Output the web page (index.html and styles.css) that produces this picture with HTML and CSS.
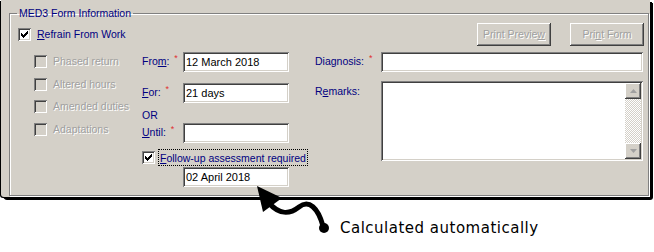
FILE: index.html
```html
<!DOCTYPE html>
<html lang="en">
<head>
    <meta charset="UTF-8">
    <title>MED3 Form Information</title>
    <link rel="stylesheet" href="styles.css">
</head>
<body>
<div class="window">
    <fieldset class="group">
        <legend>MED3 Form Information</legend>

        <div class="top-row">
            <label class="check"><span class="box checked"></span><span class="navy"><u>R</u>efrain From Work</span></label>
            <div class="buttons">
                <button class="btn" disabled>Print Previe<u>w</u></button>
                <button class="btn" disabled>Pri<u>n</u>t Form</button>
            </div>
        </div>

        <div class="columns">
            <div class="col-options">
                <label class="check off"><span class="box"></span><span>Phased return</span></label>
                <label class="check off"><span class="box"></span><span>Altered hours</span></label>
                <label class="check off"><span class="box"></span><span>Amended duties</span></label>
                <label class="check off"><span class="box"></span><span>Adaptations</span></label>
            </div>

            <div class="col-dates">
                <div class="field r-from">
                    <span class="lbl">Fro<u>m</u>: <i class="req">*</i></span>
                    <div class="input">12 March 2018</div>
                </div>
                <div class="field r-for">
                    <span class="lbl"><u>F</u>or: <i class="req">*</i></span>
                    <div class="input">21 days</div>
                </div>
                <div class="or">OR</div>
                <div class="field r-until">
                    <span class="lbl"><u>U</u>ntil: <i class="req">*</i></span>
                    <div class="input"></div>
                </div>
                <label class="check follow"><span class="box checked"></span><span class="navy focus"><u>F</u>ollow-up assessment required</span></label>
                <div class="input date">02 April 2018</div>
            </div>

            <div class="col-notes">
                <div class="field">
                    <span class="lbl wide">Diagnosis: <i class="req">*</i></span>
                    <div class="input grow"></div>
                </div>
                <div class="field remarks">
                    <span class="lbl wide">R<u>e</u>marks:</span>
                    <div class="input grow memo">
                        <div class="scroll">
                            <div class="sbtn"><svg width="7" height="4" viewBox="0 0 7 4"><path d="M3.5 0 L7 4 L0 4 Z" fill="#a0a0a0"/></svg></div>
                            <div class="track"></div>
                            <div class="sbtn"><svg width="7" height="4" viewBox="0 0 7 4"><path d="M0 0 L7 0 L3.5 4 Z" fill="#a0a0a0"/></svg></div>
                        </div>
                    </div>
                </div>
            </div>
        </div>
    </fieldset>
</div>

<div class="note">
    <svg class="arrow" width="90" height="60" viewBox="240 180 90 60">
        <path d="M268 202 C280 216, 290 214, 299 207 C309 199, 318 208, 323 226" fill="none" stroke="#000" stroke-width="5" stroke-linecap="round"/>
        <path d="M257 186 L263 212 L282 198 Z" fill="#000"/>
        <circle cx="324" cy="228" r="5" fill="#000"/>
    </svg>
    <span class="note-text">Calculated automatically</span>
</div>
</body>
</html>
```

FILE: styles.css
```css
body {
    margin: 0;
    background: #fff;
    font-family: "Liberation Sans", Arial, sans-serif;
    font-size: 10.5px;
    position: relative;
    width: 654px;
    height: 252px;
    overflow: hidden;
}

u {
    text-decoration: underline;
    text-underline-offset: 1px;
}

/* Dialog panel with its dark shadow */
.window {
    width: 649px;
    height: 197px;
    margin-left: 1px;
    background: #d4d0c8;
    box-shadow: -1px 1px 0 #000, 3px 3px 0 #000, 2px 2px 0 #000;
    border-bottom-left-radius: 3px;
    border-bottom-right-radius: 3px;
    padding-top: 7px;
    box-sizing: border-box;
}

.group {
    margin: 0 0 0 8px;
    width: 640px;
    height: 189px;
    box-sizing: border-box;
    border: 1px solid #808080;
    box-shadow: inset 1px 1px 0 #fff, 1px 1px 0 #fff;
    padding: 2px 0 0 8px;
    position: relative;
}

.group legend {
    color: #000080;
    padding: 0 2px;
    margin-left: -1px;
    font-size: 10.5px;
    line-height: 13px;
}

.navy {
    color: #000080;
}

/* Top row: main checkbox + buttons */
.top-row {
    display: flex;
    align-items: center;
    justify-content: space-between;
    height: 24px;
    padding-right: 4px;
}

.buttons {
    display: flex;
    gap: 19px;
}

.btn {
    width: 74px;
    height: 23px;
    font-family: inherit;
    font-size: 10.5px;
    background: #d4d0c8;
    color: #a0a0a0;
    text-shadow: 1px 1px 0 #fff;
    border: none;
    padding: 0;
    box-shadow: inset -1px -1px 0 #404040, inset 1px 1px 0 #fff, inset -2px -2px 0 #808080;
}

/* Checkboxes */
.check {
    display: flex;
    align-items: center;
    gap: 6px;
    height: 13px;
    line-height: 13px;
    white-space: nowrap;
}

.box {
    width: 13px;
    height: 13px;
    box-sizing: border-box;
    background: #fff;
    box-shadow: inset 1px 1px 0 #808080, inset -1px -1px 0 #fff, inset 2px 2px 0 #404040, inset -2px -2px 0 #d4d0c8;
    position: relative;
    flex: none;
}

.box.checked::after {
    content: "";
    position: absolute;
    left: 3px;
    top: 3px;
    width: 7px;
    height: 7px;
    background: no-repeat center/7px 7px url("data:image/svg+xml,%3Csvg xmlns='http://www.w3.org/2000/svg' width='7' height='7' viewBox='0 0 7 7'%3E%3Cpath d='M0 2h1v1h1v1h1v-1h1v-1h1v-1h1v-1h1v3h-1v1h-1v1h-1v1h-1v1h-1v-1h-1v-1h-1z' fill='%23000'/%3E%3C/svg%3E");
}

.check.off {
    color: #a0a0a0;
    text-shadow: 1px 1px 0 #fff;
}

.check.off .box {
    background: #d4d0c8;
}

/* Columns */
.columns {
    display: flex;
    margin-top: 6px;
}

.col-options {
    width: 108px;
    margin-left: 16px;
    padding-top: 3px;
    display: flex;
    flex-direction: column;
    gap: 9.5px;
}

.col-dates {
    width: 147px;
    display: flex;
    flex-direction: column;
}

.col-notes {
    width: 328px;
    margin-left: 26px;
    display: flex;
    flex-direction: column;
    gap: 9px;
}

.field {
    display: flex;
    align-items: flex-start;
}

.lbl {
    width: 41px;
    height: 20px;
    flex: none;
    color: #000080;
    line-height: 18px;
    white-space: nowrap;
}

.lbl.wide {
    width: 66px;
}

.req {
    color: #e03030;
    font-style: normal;
    font-size: 9px;
    line-height: 0;
    vertical-align: 4px;
    margin-left: 2px;
}

.input {
    width: 106px;
    height: 20px;
    box-sizing: border-box;
    background: #fff;
    box-shadow: inset 1px 1px 0 #808080, inset -1px -1px 0 #fff, inset 2px 2px 0 #404040, inset -2px -2px 0 #d4d0c8;
    padding: 3px 3px 0;
    line-height: 15px;
    font-size: 11px;
    color: #000;
}

.input.grow {
    width: 262px;
}

.r-for {
    margin-top: 11px;
}

.or {
    color: #000080;
    line-height: 14px;
    margin-top: 5px;
}

.r-until {
    margin-top: 1px;
}

.follow {
    margin-top: 6px;
    height: 16px;
    gap: 4px;
}

.focus {
    outline: 1px dotted #000;
    padding: 1px 1px 0;
    line-height: 14px;
}

.input.date {
    margin-top: 2px;
    margin-left: 41px;
}

.remarks .lbl {
    line-height: 14px;
    padding-top: 3px;
}

.memo {
    height: 80px;
    padding: 2px 2px 2px 0;
    display: flex;
    justify-content: flex-end;
}

.scroll {
    width: 16px;
    display: flex;
    flex-direction: column;
}

.sbtn {
    height: 16px;
    flex: none;
    background: #d4d0c8;
    box-shadow: inset -1px -1px 0 #404040, inset 1px 1px 0 #fff, inset -2px -2px 0 #808080;
    display: flex;
    align-items: center;
    justify-content: center;
}

.track {
    flex: 1;
    background: repeating-conic-gradient(#d4d0c8 0 25%, #fff 0 50%) 0 0 / 2px 2px;
}

/* Annotation below the dialog */
.arrow {
    position: absolute;
    left: 240px;
    top: 180px;
}

.note-text {
    position: absolute;
    left: 340px;
    top: 219px;
    font-family: "DejaVu Sans", sans-serif;
    font-size: 15px;
    letter-spacing: 0.5px;
    color: #000;
}
```
